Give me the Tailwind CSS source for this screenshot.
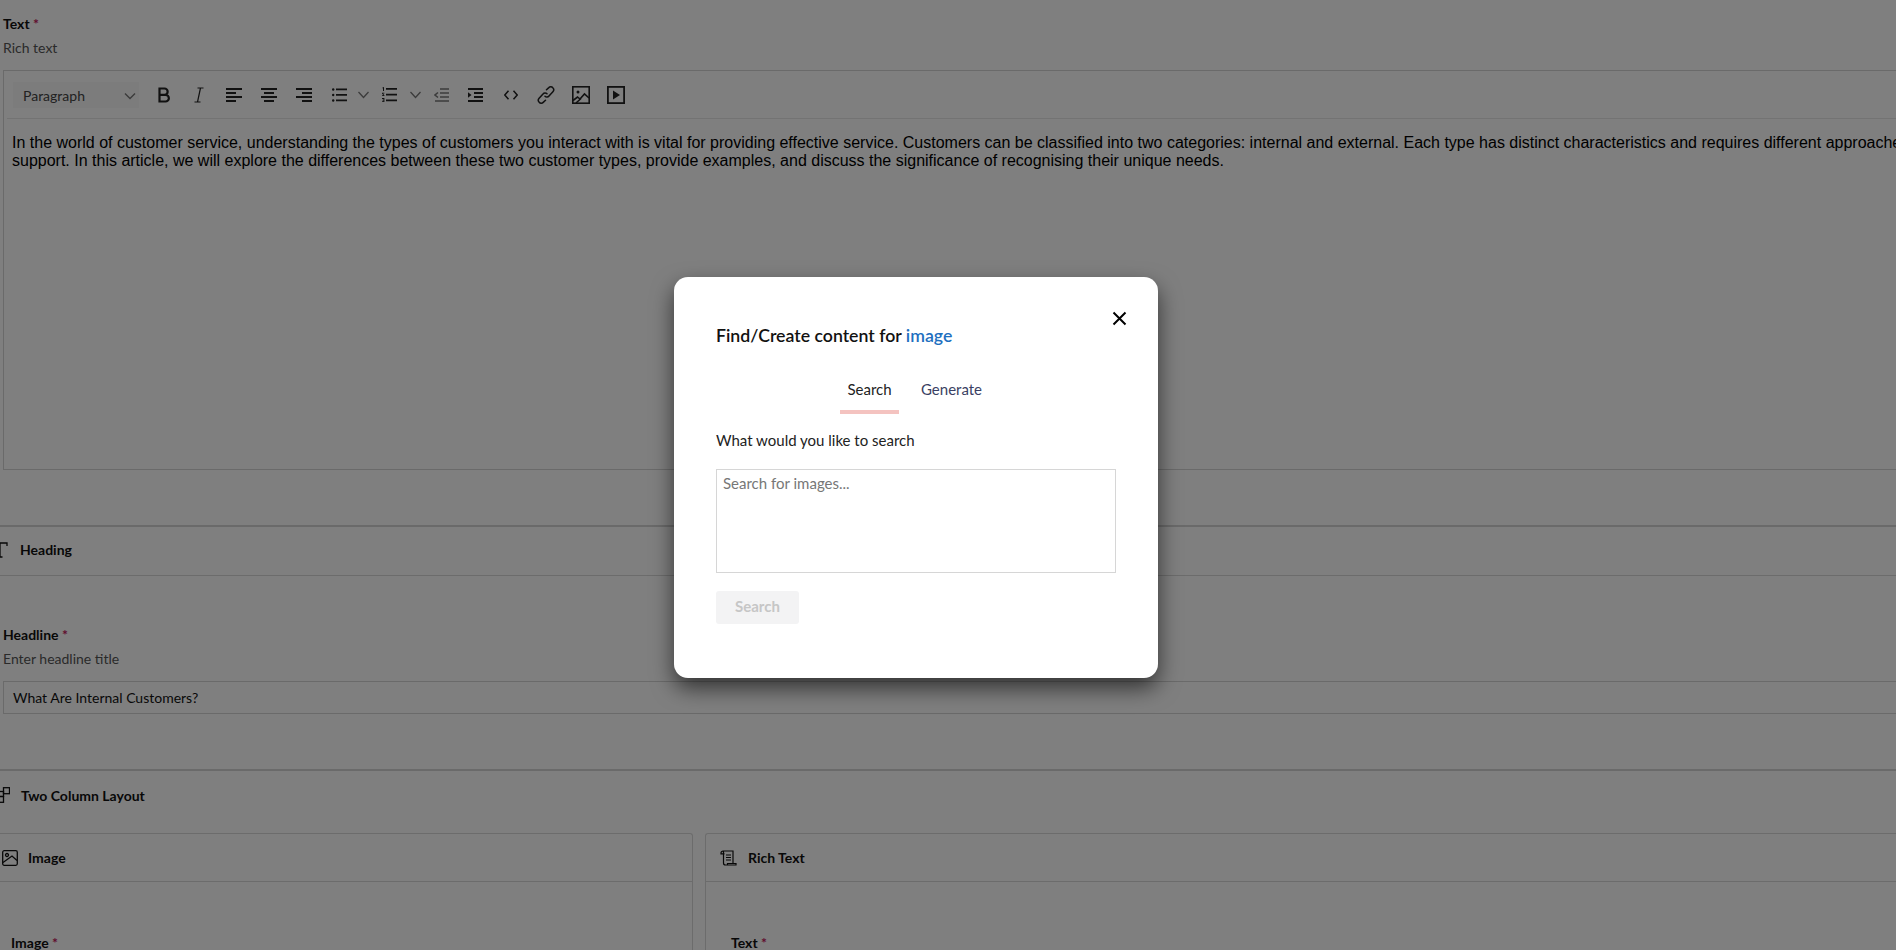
<!doctype html>
<html lang="en">

<head>
  <meta charset="UTF-8" />
  <meta name="viewport" content="width=device-width, initial-scale=1.0" />
  <title>Find/Create content</title>
  <script src="https://cdn.jsdelivr.net/npm/@tailwindcss/browser@4"></script>
</head>

<body class="h-screen overflow-hidden bg-white font-['Lato',sans-serif] text-[#111]">
  <!-- Page behind the modal -->
  <main class="w-[2100px]">
    <!-- Rich text field -->
    <section class="pl-[3px] pt-[15px]">
      <p class="text-[14px] leading-[18px] font-bold">Text <span class="text-[#c2185b]">*</span></p>
      <p class="mt-[6px] text-[14px] leading-[18px] text-[#555]">Rich text</p>
      <div class="mt-[13px] h-[400px] border border-[#d4d4d4]">
        <!-- Toolbar -->
        <div class="ml-[3px] flex h-[48px] items-center border-b border-[#e6e6e6] pl-[6px] text-[#1c1c1c]">
          <div class="flex h-[26px] w-[126px] items-center justify-between bg-[#f8f8f8] pl-[10px] pr-[3px] pt-[2px] text-[14px] text-[#444]">
            <span>Paragraph</span>
            <svg width="12" height="12" viewBox="0 0 12 12" fill="none" stroke="#777" stroke-width="1.4"><path d="M1 3.5 6 8.5 11 3.5" /></svg>
          </div>
          <div class="ml-[7px] flex items-center text-[#222]">
            <span class="flex w-[35px] justify-center"><svg width="14" height="16" viewBox="0 0 14 16" fill="none" stroke="currentColor" stroke-width="2.2"><path d="M2.5 1.5h5a3 3 0 0 1 0 6.3h-5zM2.5 7.8h6a3.3 3.3 0 0 1 0 6.7h-6z" /></svg></span>
            <span class="flex w-[35px] justify-center"><svg width="12" height="16" viewBox="0 0 12 16" fill="none" stroke="currentColor" stroke-width="1.2"><path d="M4.5 1h6M1.5 15h6M7.5 1 4.5 15" /></svg></span>
            <span class="flex w-[35px] justify-center"><svg width="16" height="14" viewBox="0 0 16 14" stroke="currentColor" stroke-width="1.8"><path d="M0 1h16M0 5h10M0 9h16M0 13h10" /></svg></span>
            <span class="flex w-[35px] justify-center"><svg width="16" height="14" viewBox="0 0 16 14" stroke="currentColor" stroke-width="1.8"><path d="M0 1h16M3 5h10M0 9h16M3 13h10" /></svg></span>
            <span class="flex w-[35px] justify-center"><svg width="16" height="14" viewBox="0 0 16 14" stroke="currentColor" stroke-width="1.8"><path d="M0 1h16M6 5h10M0 9h16M6 13h10" /></svg></span>
            <span class="flex w-[33px] justify-center pl-[4px]"><svg width="15" height="14" viewBox="0 0 15 14" fill="currentColor"><circle cx="1.2" cy="1.5" r="1.2" /><circle cx="1.2" cy="7" r="1.2" /><circle cx="1.2" cy="12.5" r="1.2" /><path d="M4 .6h11v1.7H4zM4 6.1h11v1.7H4zM4 11.6h11v1.7H4z" /></svg></span>
            <span class="flex w-[19px] justify-center"><svg width="11" height="8" viewBox="0 0 11 8" fill="none" stroke="#777" stroke-width="1.3"><path d="M.5 1 5.5 6.5 10.5 1" /></svg></span>
            <span class="flex w-[33px] justify-center"><svg width="15" height="15" viewBox="0 0 15 15" fill="currentColor"><path d="M.5.5 2 0v4H1V1.2L.5 1.4zM0 5.7h2.400v.9H1l1.400 1.600v.8H0V8.200h1.400L0 6.500zM0 11h2.400v4H0v-.8h1.500v-.8H.5v-.7h1v-.8H0zM4 1h11v1.700H4zM4 6.700h11v1.700H4zM4 12.500h11v1.700H4z" /></svg></span>
            <span class="flex w-[19px] justify-center"><svg width="11" height="8" viewBox="0 0 11 8" fill="none" stroke="#777" stroke-width="1.3"><path d="M.5 1 5.500 6.500 10.500 1" /></svg></span>
            <span class="flex w-[33px] justify-center"><svg width="15" height="14" viewBox="0 0 15 14" stroke="#777" stroke-width="1.600" fill="none"><path d="M6 1h9M6 5h9M6 9h9M1 13h14M4 4.500 1 7 4 9.500" /></svg></span>
            <span class="flex w-[35px] justify-center"><svg width="15" height="14" viewBox="0 0 15 14" stroke="currentColor" stroke-width="1.800" fill="none"><path d="M0 1h15M6 5h9M6 9h9M0 13h15" /><path d="M0 4.200 3.500 7 0 9.800z" fill="currentColor" stroke="none" /></svg></span>
            <span class="flex w-[35px] justify-center"><svg width="14" height="10" viewBox="0 0 14 10" fill="none" stroke="currentColor" stroke-width="1.500"><path d="M4.500 .8.800 5l3.700 4.200M9.500 .8 13.200 5 9.500 9.200" /></svg></span>
            <span class="flex w-[35px] justify-center"><svg width="18" height="18" viewBox="0 0 18 18" fill="none" stroke="currentColor" stroke-width="1.500" stroke-linecap="round"><path d="M9.500 3.800 11.800 1.600a2.700 2.700 0 0 1 4 .2 2.800 2.800 0 0 1 .1 3.900L12 10a2.700 2.700 0 0 1-4 .2" /><path d="M8.500 14.200 6.200 16.400a2.700 2.700 0 0 1-4-.2 2.800 2.800 0 0 1-.1-3.900L6 8a2.700 2.700 0 0 1 4-.2" /></svg></span>
            <span class="flex w-[35px] justify-center"><svg width="18" height="18" viewBox="0 0 18 18" fill="none" stroke="currentColor" stroke-width="1.600"><rect x=".8" y=".8" width="16.400" height="16.400" /><circle cx="6" cy="6" r="1.500" fill="currentColor" stroke="none" /><path d="M1 14.500l4.500-3.500 2.500 2 4.500-5L17 12M4 17l5-4.500" /></svg></span>
            <span class="flex w-[35px] justify-center"><svg width="18" height="18" viewBox="0 0 18 18" fill="none" stroke="currentColor" stroke-width="1.800"><rect x=".9" y=".9" width="16.200" height="16.200" /><path d="M6 4.500 13 9l-7 4.500z" fill="currentColor" stroke="none" /></svg></span>
          </div>
        </div>
        <div class="whitespace-nowrap px-[8px] pt-[15px] font-['Liberation_Sans',sans-serif] text-[16px] leading-[18px] text-black">
          In the world of customer service, understanding the types of customers you interact with is vital for providing effective service. Customers can be classified into two categories: internal and external. Each type has distinct characteristics and requires different approaches to ensure satisfaction and<br />
          support. In this article, we will explore the differences between these two customer types, provide examples, and discuss the significance of recognising their unique needs.
        </div>
      </div>
    </section>

    <!-- Heading block -->
    <section class="mt-[55px] border-t-2 border-[#d4d4d4]">
      <div class="flex h-[49px] items-center gap-[12px] border-b border-[#d9d9d9] pb-[3px] text-[14px] font-bold">
        <svg class="ml-[-7px]" width="15" height="16" viewBox="0 0 15 16" fill="none" stroke="currentColor" stroke-width="1.300"><path d="M1 1h13v3M7 1v14M4.500 15h5" /></svg>
        <span>Heading</span>
      </div>
      <div class="pl-[3px] pt-[50px]">
        <p class="text-[14px] leading-[18px] font-bold">Headline <span class="text-[#c2185b]">*</span></p>
        <p class="mt-[6px] text-[14px] leading-[18px] text-[#555]">Enter headline title</p>
        <div class="mt-[13px] flex h-[33px] items-center border border-[#d4d4d4] pb-[1px] pl-[9px] text-[14px]">What Are Internal Customers?</div>
      </div>
    </section>

    <!-- Two column block -->
    <section class="mt-[55px] border-t-2 border-[#d4d4d4]">
      <div class="flex h-[62px] items-center gap-[11px] pb-[14px] text-[14px] font-bold">
        <svg class="ml-[-5px]" width="15" height="16" viewBox="0 0 15 16" fill="none" stroke="currentColor" stroke-width="1.300"><rect x="8.500" y=".7" width="6" height="6" /><rect x=".7" y="4.500" width="7.800" height="5" /><rect x=".7" y="9.500" width="7.800" height="5.800" /></svg>
        <span>Two Column Layout</span>
      </div>
      <div class="flex gap-[12px]">
        <div class="w-[693px] rounded-tr-[3px] border-r border-t border-[#d9d9d9]">
          <div class="flex h-[48px] items-center gap-[10px] border-b border-[#d9d9d9] pl-[2px] text-[14px] font-bold">
            <svg width="16" height="16" viewBox="0 0 16 16" fill="none" stroke="currentColor" stroke-width="1.300"><rect x=".7" y=".7" width="14.600" height="14.600" rx="1.500" /><circle cx="5" cy="5" r="1.500" /><path d="M1 12.500 10 6l5 4.500" /></svg>
            <span>Image</span>
          </div>
          <p class="pl-[11px] pt-[52px] text-[14px] leading-[18px] font-bold">Image <span class="text-[#c2185b]">*</span></p>
        </div>
        <div class="flex-1 rounded-tl-[3px] border-l border-t border-[#d9d9d9]">
          <div class="flex h-[48px] items-center gap-[11px] border-b border-[#d9d9d9] pl-[14px] text-[14px] font-bold">
            <svg width="17" height="16" viewBox="0 0 17 16" fill="none" stroke="currentColor" stroke-width="1.200"><path d="M3 1h10v12.500M3 1a2 2 0 0 0-2 2v.8h3.500M3.500 1.500V13a2 2 0 0 0 2 2h10.500v-1.500H7.500V15M6 5h5M6 7.500h5M6 10h5" /></svg>
            <span>Rich Text</span>
          </div>
          <p class="pl-[25px] pt-[52px] text-[14px] leading-[18px] font-bold">Text <span class="text-[#c2185b]">*</span></p>
        </div>
      </div>
    </section>
  </main>

  <!-- Modal overlay -->
  <div class="absolute inset-0 flex items-center justify-center bg-black/50 pr-[64px] pt-[5px]">
    <div class="relative h-[401px] w-[484px] rounded-[14px] bg-white px-[42px] pt-[47px] shadow-[0_10px_22px_rgba(0,0,0,0.6)]">
      <button class="absolute right-[31px] top-[34px] text-black">
        <svg class="block" width="15" height="15" viewBox="0 0 15 15" fill="none" stroke="currentColor" stroke-width="2"><path d="M1.500 1.500l12 12M13.500 1.500l-12 12" /></svg>
      </button>
      <h2 class="text-[17.700px] leading-[24px] font-semibold text-[#111]">Find/Create content for <span class="text-[#1e6fbf]">image</span></h2>
      <div class="mt-[23px] flex justify-center gap-[15px] pr-[3px] text-[15px]">
        <div class="h-[43px] w-[59px] border-b-4 border-[#f4c3c0] pt-[8px] text-center leading-[20px] text-[#222]">Search</div>
        <div class="h-[43px] w-[75px] pt-[8px] text-center leading-[20px] text-[#3a3f63]">Generate</div>
      </div>
      <p class="mt-[16px] text-[15px] leading-[20px] text-[#222]">What would you like to search</p>
      <textarea class="mt-[19px] block h-[104px] w-[400px] resize-none border border-[#d6d6d6] px-[6px] py-[4px] text-[15px] leading-[18px] outline-none placeholder:text-[#777]" placeholder="Search for images..."></textarea>
      <button class="mt-[18px] h-[33px] w-[83px] rounded-[3px] bg-[#f3f3f4] pb-[2px] text-[15px] font-bold text-[#c6c6c6]">Search</button>
    </div>
  </div>
</body>

</html>
